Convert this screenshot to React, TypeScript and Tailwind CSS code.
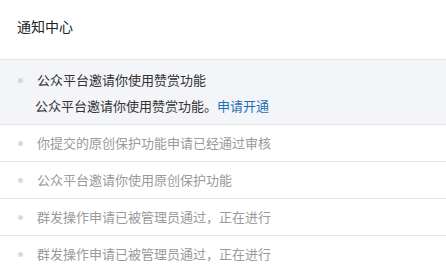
import React from 'react';

interface Notice {
  text: string;
  active?: boolean;
  detail?: string;
  link?: string;
}

const notices: Notice[] = [
  {
    text: '公众平台邀请你使用赞赏功能',
    active: true,
    detail: '公众平台邀请你使用赞赏功能。',
    link: '申请开通',
  },
  { text: '你提交的原创保护功能申请已经通过审核' },
  { text: '公众平台邀请你使用原创保护功能' },
  { text: '群发操作申请已被管理员通过，正在进行' },
  { text: '群发操作申请已被管理员通过，正在进行' },
];

const App: React.FC = () => {
  return (
    <div
      className="w-full min-h-screen bg-white"
      style={{ fontFamily: '"Noto Sans CJK SC", "Noto Sans", sans-serif' }}
    >
      <header className="h-[60px] border-b border-[#e4e6eb] pl-[17px] pt-[16px]">
        <h1 className="text-[14px] leading-[20px] text-[#222]">通知中心</h1>
      </header>

      <ul>
        {notices.map((n, i) =>
          n.active ? (
            <li key={i} className="h-[65px] bg-[#f4f5f9] border-b border-[#e4e6eb] pt-[7px]">
              <div className="flex items-center h-[26px] pl-[18px]">
                <span className="w-[5px] h-[5px] rounded-full bg-[#d4d6db] shrink-0" />
                <span className="ml-[14px] text-[13px] text-[#333]">{n.text}</span>
              </div>
              <div className="h-[26px] leading-[26px] pl-[35px] text-[13px] text-[#333]">
                {n.detail}
                <a href="#" className="text-[#1f6fb6]">{n.link}</a>
              </div>
            </li>
          ) : (
            <li key={i} className="h-[37px] border-b border-[#e7e8eb] flex items-center pl-[18px]">
              <span className="w-[5px] h-[5px] rounded-full bg-[#dadada] shrink-0" />
              <span className="ml-[14px] text-[13px] text-[#9a9a9a]">{n.text}</span>
            </li>
          )
        )}
      </ul>
    </div>
  );
};

export default App;
